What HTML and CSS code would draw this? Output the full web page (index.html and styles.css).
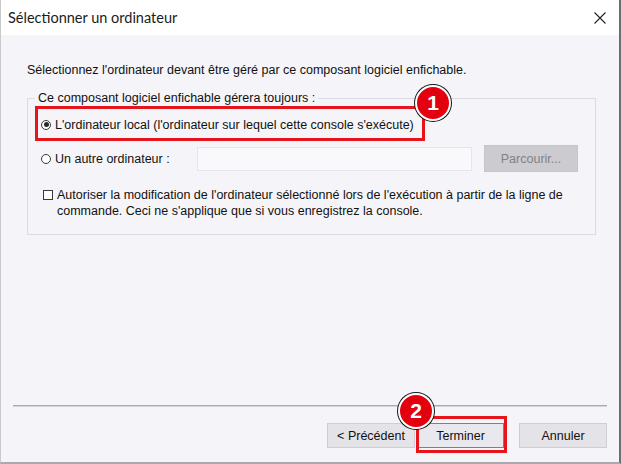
FILE: index.html
```html
<!DOCTYPE html>
<html lang="fr">
<head>
<meta charset="utf-8">
<title>Sélectionner un ordinateur</title>
<link rel="stylesheet" href="styles.css">
</head>
<body>
<div class="window">
  <div class="titlebar">
    <span class="title">Sélectionner un ordinateur</span>
    <svg class="close" width="12" height="12" viewBox="0 0 12 12"><path d="M0.5 0.5 L11.5 11.5 M11.5 0.5 L0.5 11.5" stroke="#222" stroke-width="1.1" fill="none"/></svg>
  </div>
  <div class="content">
    <p class="intro">Sélectionnez l'ordinateur devant être géré par ce composant logiciel enfichable.</p>
    <fieldset class="group">
      <legend>Ce composant logiciel enfichable gérera toujours :</legend>
      <div class="choice local">
        <span class="radio checked"></span>
        <span class="label">L'ordinateur local (l'ordinateur sur lequel cette console s'exécute)</span>
        <span class="badge badge-one">1</span>
      </div>
      <div class="choice other">
        <span class="radio"></span>
        <span class="label other-label">Un autre ordinateur :</span>
        <span class="textbox"></span>
        <span class="btn disabled">Parcourir...</span>
      </div>
      <div class="check-row">
        <span class="checkbox"></span>
        <span class="check-text">Autoriser la modification de l'ordinateur sélectionné lors de l'exécution à partir de la ligne de commande. Ceci ne s'applique que si vous enregistrez la console.</span>
      </div>
    </fieldset>
    <div class="separator"></div>
    <div class="buttons">
      <span class="btn">&lt; Précédent</span>
      <span class="finish">
        <span class="btn default">Terminer</span>
        <span class="highlight"></span>
        <span class="badge badge-two">2</span>
      </span>
      <span class="btn cancel">Annuler</span>
    </div>
  </div>
</div>
</body>
</html>
```
FILE: styles.css
```css
* { box-sizing: border-box; }
html, body { margin: 0; padding: 0; background: #ffffff; }
body { font-family: "Liberation Sans", Arial, sans-serif; font-size: 12.5px; color: #111; }

.window {
  width: 621px;
  height: 464px;
  display: flex;
  flex-direction: column;
  border-left: 1px solid #c9c9cc;
  border-right: 2px solid #6e6e72;
  border-bottom: 2px solid #a9a9ae;
  background: #f5f4f9;
}

.titlebar {
  height: 35px;
  flex: 0 0 35px;
  background: #ffffff;
  display: flex;
  align-items: center;
  justify-content: space-between;
  padding-left: 7px;
  padding-right: 13px;
}
.title { font-family: Lato, "Liberation Sans", sans-serif; font-size: 14.5px; color: #1b1b1b; }
.close { display: block; }

.content {
  flex: 1;
  display: flex;
  flex-direction: column;
  padding-bottom: 14px;
}

.intro {
  margin: 27px 0 0 26px;
  line-height: 16px;
}

.group {
  margin: 12px 23px 0 26px;
  padding: 0 0 15px 7px;
  border: 1px solid #dcdbe2;
  min-width: 0;
}
.group legend {
  padding: 0 3px;
  line-height: 16px;
}

.choice {
  display: flex;
  align-items: center;
}
.choice.local {
  position: relative;
  width: 390px;
  height: 35px;
  border: 3px solid #e8141c;
  padding-left: 3px;
  padding-top: 2px;
}
.choice.other {
  height: 27px;
  margin-top: 4px;
  padding-left: 6px;
}

.radio {
  width: 10px;
  height: 10px;
  border: 1px solid #3a3a3a;
  border-radius: 50%;
  background: #fff;
  margin-right: 4px;
  flex: 0 0 10px;
  display: flex;
  align-items: center;
  justify-content: center;
}
.radio.checked::after {
  content: "";
  width: 5px;
  height: 5px;
  border-radius: 50%;
  background: #2a2a2a;
}

.label { line-height: 16px; white-space: nowrap; }
.other-label { flex: 0 0 142px; }

.textbox {
  width: 275px;
  height: 24px;
  background: #f9f9fb;
  border: 1px solid #e6e5eb;
}

.btn {
  display: flex;
  align-items: center;
  justify-content: center;
  height: 25px;
  width: 88px;
  background: #e4e3e8;
  border: 1px solid #cfced4;
  color: #111;
  white-space: nowrap;
}
.btn.disabled {
  width: 94px;
  height: 27px;
  margin-left: 12px;
  background: #cccbd0;
  border-color: #c6c5ca;
  color: #838287;
}

.check-row {
  display: flex;
  align-items: flex-start;
  margin-top: 15px;
  padding-left: 8px;
}
.checkbox {
  width: 10px;
  height: 10px;
  flex: 0 0 10px;
  border: 1px solid #3a3a3a;
  background: #fff;
  margin-top: 3px;
  margin-right: 4px;
}
.check-text {
  line-height: 16px;
  max-width: 530px;
}

.separator {
  margin: auto 12px 0 12px;
  height: 2px;
  border-top: 1px solid #a9a8b0;
  background: #d6d5dc;
}

.buttons {
  display: flex;
  justify-content: flex-end;
  margin-top: 16px;
  padding-right: 12px;
}
.finish {
  position: relative;
  margin-left: 2px;
}
.btn.default {
  width: 87px;
  background: #e9e8ee;
  border: 1px solid #3d8fe0;
}
.btn.cancel { margin-left: 15px; }

.highlight {
  position: absolute;
  left: -1px;
  top: -7px;
  width: 91px;
  height: 37px;
  border: 3px solid #e8141c;
}

.badge {
  position: absolute;
  width: 36px;
  height: 36px;
  border-radius: 50%;
  background: #e3000f;
  border: 2px solid #ffffff;
  box-shadow: 0 0 0 1px #141414;
  color: #fff;
  font-weight: bold;
  font-size: 21px;
  line-height: 32px;
  text-align: center;
}
.badge-one { left: 377px; top: -24px; }
.badge-two { left: -19px; top: -30px; }
```
